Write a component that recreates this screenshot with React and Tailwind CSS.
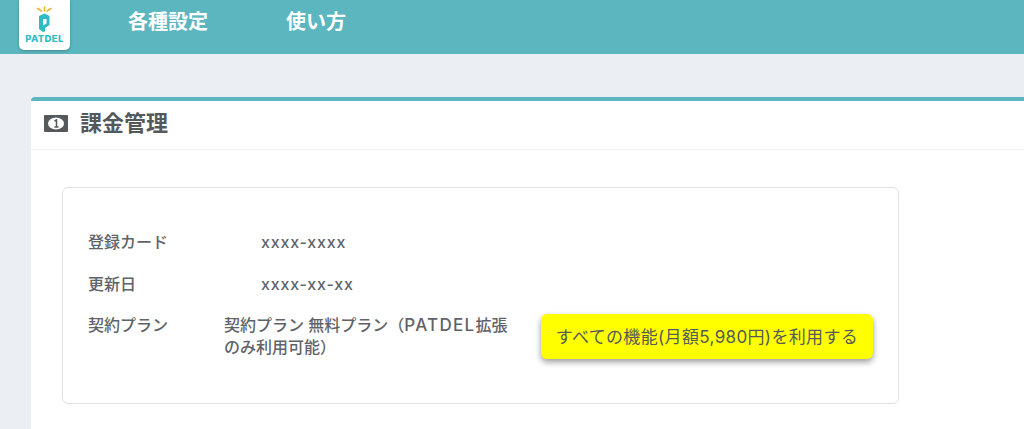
import React from "react";

const font = { fontFamily: '"Inter", "Noto Sans CJK JP", sans-serif' };

function Logo() {
  return (
    <svg width="51" height="34" viewBox="0 0 51 34">
      <g stroke="#f5b335" strokeWidth="1.6" strokeLinecap="round">
        <path d="M18.5 8.5 L22.5 11" />
        <path d="M25.5 7 L25.5 11" />
        <path d="M32 8.5 L28 11" />
      </g>
      <path fillRule="evenodd" fill="#2dbdc4" d="M25.5 13.5 L30.5 16 L30.5 25 L26 28 L26 31.5 L24 32 L20 29 L20 16 Z M24 19 L24 25.5 L27.5 23.5 L27.5 19 Z" />
    </svg>
  );
}

function BillIcon() {
  return (
    <svg width="24" height="17" viewBox="0 0 24 17" className="shrink-0">
      <rect width="24" height="17" rx="1" fill="#55595c" />
      <ellipse cx="12" cy="8.5" rx="8" ry="6" fill="#ffffff" />
      <path d="M10.5 6 L12.5 5 L12.5 12 M10.5 12 L14.5 12" fill="none" stroke="#55595c" strokeWidth="1.5" />
    </svg>
  );
}

function Row({ label, children, className = "" }) {
  return (
    <div className={`flex text-[16px] font-medium leading-[23px] text-[#5f6368] ${className}`}>
      <div className="w-[136px] shrink-0">{label}</div>
      {children}
    </div>
  );
}

export default function App() {
  return (
    <div className="h-[429px] w-[1024px] overflow-hidden bg-[#ebeef3]" style={font}>
      <header className="flex h-[54px] items-start bg-[#5cb6bf]">
        <div className="ml-[19px] flex h-[50px] w-[51px] flex-col items-center rounded-b-[5px] bg-white shadow-[0_1px_3px_rgba(0,0,0,0.25)]">
          <div className="h-[34px]"><Logo /></div>
          <div className="text-[9.5px] font-extrabold leading-[10px] tracking-[0.4px] text-[#2dbdc4]">PATDEL</div>
        </div>
        <nav className="ml-[58px] flex gap-[79px] pt-[9px] text-[20px] font-bold leading-[26px] text-white">
          <span className="w-[79px] whitespace-nowrap">各種設定</span>
          <span>使い方</span>
        </nav>
      </header>

      <main className="pl-[31px] pt-[43px]">
        <section className="h-[340px] w-[1000px] rounded-tl-[4px] border-t-[4px] border-[#5cb6bf] bg-white">
          <div className="flex h-[49px] items-center gap-[12px] border-b border-[#f0f1f3] pl-[13px] text-[#55595c]">
            <div className="-mt-[4px] flex"><BillIcon /></div>
            <h1 className="-mt-[4px] text-[22px] font-bold leading-[26px]">課金管理</h1>
          </div>
          <div className="ml-[31px] mt-[37px] flex h-[217px] w-[837px] flex-col rounded-[6px] border border-[#dfe1e4] pl-[25px] pt-[43px]">
            <Row label="登録カード" className="h-[42px]">
              <span className="pl-[37px] tracking-[0.8px]">xxxx-xxxx</span>
            </Row>
            <Row label="更新日" className="h-[41px]">
              <span className="pl-[37px] tracking-[0.8px]">xxxx-xx-xx</span>
            </Row>
            <Row label="契約プラン">
              <div className="w-[317px] shrink-0 leading-[22px]">
                契約プラン 無料プラン（<span className="text-[17px] tracking-[1.3px]">PATDEL</span>拡張<br />のみ利用可能）
              </div>
              <button className="h-[45px] w-[332px] rounded-[6px] bg-[#ffff00] pt-[1px] text-[17px] font-normal tracking-[0.35px] text-[#55595c] shadow-[0_3px_6px_rgba(0,0,0,0.4)]">
                すべての機能(月額5,980円)を利用する
              </button>
            </Row>
          </div>
        </section>
      </main>
    </div>
  );
}
